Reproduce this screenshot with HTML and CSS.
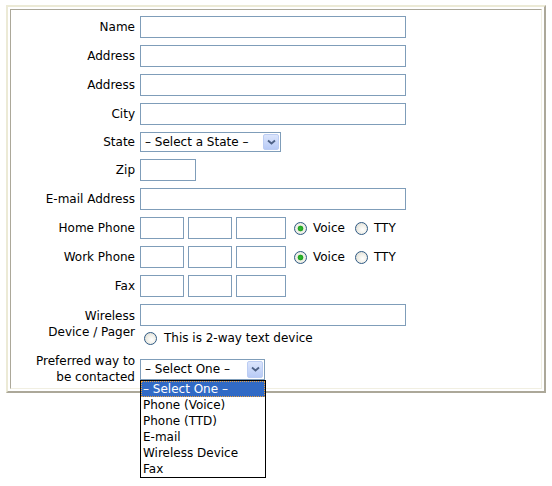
FILE: index.html
```html
<!DOCTYPE html>
<html lang="en">
<head>
  <meta charset="UTF-8" />
  <title>Contact Information</title>
  <link rel="stylesheet" href="styles.css">
</head>
<body>
  <div class="frame">
    <div class="inner">
      <form class="form">
        <label class="lbl">Name</label>
        <div class="field"><input class="text wide" type="text"></div>

        <label class="lbl">Address</label>
        <div class="field"><input class="text wide" type="text"></div>

        <label class="lbl">Address</label>
        <div class="field"><input class="text wide" type="text"></div>

        <label class="lbl">City</label>
        <div class="field"><input class="text wide" type="text"></div>

        <label class="lbl">State</label>
        <div class="field">
          <div class="select state">
            <span class="sel-text">&ndash; Select a State &ndash;</span>
            <span class="arrow"><svg width="9" height="6" viewBox="0 0 9 6"><path d="M1 1.5 L4.5 4.5 L8 1.5" fill="none" stroke="#4d6185" stroke-width="1.8"/></svg></span>
          </div>
        </div>

        <label class="lbl">Zip</label>
        <div class="field"><input class="text zip" type="text"></div>

        <label class="lbl">E-mail Address</label>
        <div class="field"><input class="text wide" type="text"></div>

        <label class="lbl">Home Phone</label>
        <div class="field">
          <input class="text ph" type="text">
          <input class="text ph" type="text">
          <input class="text ph4" type="text">
          <span class="opts">
            <label class="opt"><input type="radio" name="home" checked> Voice</label>
            <label class="opt"><input type="radio" name="home"> TTY</label>
          </span>
        </div>

        <label class="lbl">Work Phone</label>
        <div class="field">
          <input class="text ph" type="text">
          <input class="text ph" type="text">
          <input class="text ph4" type="text">
          <span class="opts">
            <label class="opt"><input type="radio" name="work" checked> Voice</label>
            <label class="opt"><input type="radio" name="work"> TTY</label>
          </span>
        </div>

        <label class="lbl">Fax</label>
        <div class="field">
          <input class="text ph" type="text">
          <input class="text ph" type="text">
          <input class="text ph4" type="text">
        </div>

        <label class="lbl top">Wireless<br>Device / Pager</label>
        <div class="field stack">
          <input class="text wide" type="text">
          <label class="opt twoway"><input type="radio" name="twoway"> This is 2-way text device</label>
        </div>

        <label class="lbl">Preferred way to<br>be contacted</label>
        <div class="field">
          <div class="combo">
            <div class="select pref">
              <span class="sel-text">&ndash; Select One &ndash;</span>
              <span class="arrow"><svg width="9" height="6" viewBox="0 0 9 6"><path d="M1 1.5 L4.5 4.5 L8 1.5" fill="none" stroke="#4d6185" stroke-width="1.8"/></svg></span>
            </div>
            <ul class="menu">
              <li class="active">&ndash; Select One &ndash;</li>
              <li>Phone (Voice)</li>
              <li>Phone (TTD)</li>
              <li>E-mail</li>
              <li>Wireless Device</li>
              <li>Fax</li>
            </ul>
          </div>
        </div>
      </form>
    </div>
  </div>
</body>
</html>
```

FILE: styles.css
```css
html, body {
  min-height: 100%;
}
body {
  box-sizing: border-box;
  min-height: 486px;
  margin: 0;
  padding: 5px 0 0 6px;
  background: white;
  font-family: "DejaVu Sans", Tahoma, sans-serif;
  font-size: 12px;
  color: black;
}
.frame {
  box-sizing: border-box;
  width: 540px;
  border: 2px solid;
  border-color: #ecead6 #aca899 #aca899 #ecead6;
  padding: 2px;
}
.inner {
  border: 1px solid;
  border-color: #aca899 #f1efe2 #f1efe2 #aca899;
  padding: 6px 0 3px 0;
}
.form {
  display: grid;
  grid-template-columns: 124px 1fr;
  column-gap: 5px;
  row-gap: 7px;
  align-items: center;
}
.lbl {
  text-align: right;
  line-height: 16px;
}
.lbl.top {
  align-self: start;
  padding-top: 4px;
}
.field {
  display: flex;
  align-items: center;
  gap: 4px;
}
.field.stack {
  flex-direction: column;
  align-items: flex-start;
  gap: 4px;
}
.text {
  box-sizing: border-box;
  height: 22px;
  border: 1px solid #7f9db9;
  padding: 0 2px;
  margin: 0;
  font: inherit;
  background: white;
}
.wide { width: 266px; }
.zip { width: 56px; }
.ph { width: 44px; }
.ph4 { width: 50px; }

.opts {
  display: flex;
  gap: 10px;
  margin-left: 4px;
}
.opt {
  display: flex;
  align-items: center;
  gap: 6px;
  line-height: 16px;
}
.opt input {
  appearance: none;
  -webkit-appearance: none;
  box-sizing: border-box;
  width: 13px;
  height: 13px;
  margin: 0;
  border: 1px solid #2f5a84;
  border-radius: 50%;
  background: radial-gradient(circle at 60% 60%, #ffffff 0, #f0efe8 45%, #d6d5cc 100%);
}
.opt input:checked {
  background: radial-gradient(circle, #2fbf2f 0, #21a121 2.5px, #e7efe0 3.2px, #f2f1ea 55%, #d6d5cc 100%);
}
.twoway {
  margin-left: 4px;
  gap: 7px;
}

.select {
  box-sizing: border-box;
  height: 20px;
  border: 1px solid #7f9db9;
  background: white;
  display: flex;
  align-items: center;
  justify-content: space-between;
  padding: 1px;
}
.state { width: 141px; }
.pref { width: 125px; height: 21px; }
.sel-text {
  padding-left: 3px;
  white-space: nowrap;
}
.arrow {
  box-sizing: border-box;
  width: 16px;
  height: 100%;
  display: flex;
  align-items: center;
  justify-content: center;
  border: 1px solid #bccdf3;
  border-radius: 2px;
  background: linear-gradient(#dbe5fc, #b8cbf6);
}

.combo {
  position: relative;
}
.menu {
  position: absolute;
  top: 100%;
  left: 0;
  box-sizing: border-box;
  width: 126px;
  margin: 0;
  padding: 0;
  list-style: none;
  border: 1px solid black;
  background: white;
  z-index: 2;
}
.menu li {
  height: 16px;
  line-height: 16px;
  padding-left: 2px;
  white-space: nowrap;
}
.menu li.active {
  background: #316ac5;
  color: white;
  outline: 1px dotted #e8a040;
  outline-offset: -1px;
}
```
